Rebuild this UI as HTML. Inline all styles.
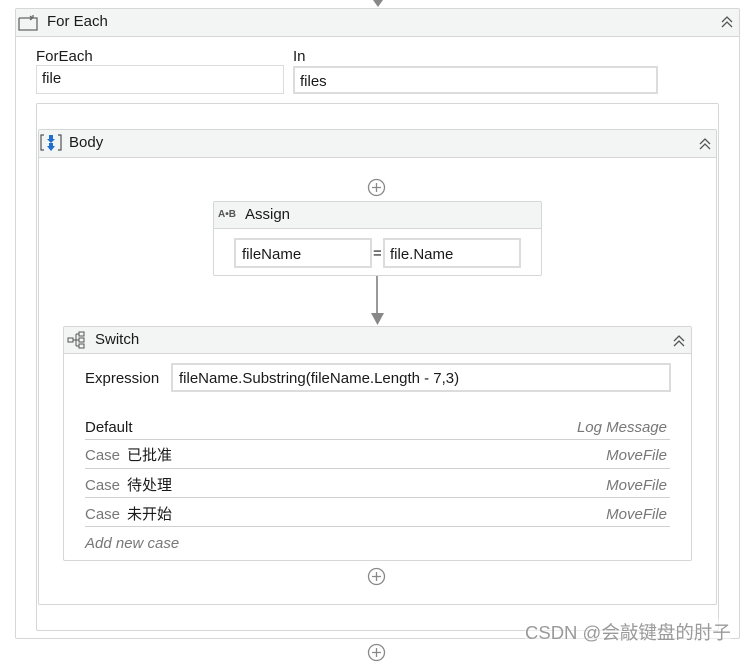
<!DOCTYPE html>
<html><head><meta charset="utf-8"><style>
*{box-sizing:border-box;margin:0;padding:0}
body{width:750px;height:652px;background:#fff;position:relative;overflow:hidden;font-family:"Liberation Sans","Noto Sans CJK SC",sans-serif;font-size:15px;color:#1a1a1a}
.a{position:absolute}
.box{position:absolute;border:1px solid #d6d6d6;border-radius:2px;background:#fff}
.hdr{position:absolute;left:0;right:0;top:0;background:#f3f4f4;border-bottom:1px solid #d6d6d6}
.inp{position:absolute;border:2px solid #dcdcdc;background:#fff;padding-left:5px;line-height:24px}
.row{position:absolute;left:85px;width:585px;border-bottom:1px solid #d0d0d0;height:29px}
.g{color:#777}
.it{font-style:italic;color:#777}
.cn{font-family:"Noto Sans CJK SC",sans-serif;font-size:15px;color:#1a1a1a}
</style></head><body>
<svg class="a" style="left:372px;top:0" width="12" height="8"><path d="M1 0 L11 0 L6 7Z" fill="#888"/></svg>

<div class="box" style="left:15px;top:8px;width:725px;height:631px">
 <div class="hdr" style="height:28px"></div>
</div>
<svg class="a" style="left:18px;top:13px" width="22" height="18"><path d="M1 5 H8 M15 5 H19 V17 H1 V5" fill="none" stroke="#666" stroke-width="1.3"/><path d="M8 5 H14 M12 3 L14.5 5 L12 7" fill="none" stroke="#666" stroke-width="1.3"/><path d="M15 2 V5" stroke="#666" stroke-width="1.3"/></svg>
<div class="a" style="left:47px;top:13px">For Each</div>
<svg class="a" style="left:720px;top:15px" width="14" height="14"><path d="M2 7 L7 2 L12 7 M2 12 L7 7 L12 12" fill="none" stroke="#555" stroke-width="1.3"/></svg>

<div class="a" style="left:36px;top:48px">ForEach</div>
<div class="inp" style="left:36px;top:65px;width:248px;height:29px;border-width:1px;line-height:26px">file</div>
<div class="a" style="left:293px;top:48px">In</div>
<div class="inp" style="left:293px;top:66px;width:365px;height:28px;line-height:27px">files</div>

<div class="box" style="left:36px;top:103px;width:683px;height:528px"></div>
<div class="box" style="left:38px;top:129px;width:679px;height:476px">
 <div class="hdr" style="height:28px"></div>
</div>
<svg class="a" style="left:40px;top:134px" width="22" height="18"><path d="M4 1 H1 V16 H4 M18 1 H21 V16 H18" fill="none" stroke="#555" stroke-width="1.2"/><rect x="9" y="1" width="4" height="4" fill="#1e6fd0"/><path d="M7 5 H15 L11 9Z" fill="#1e6fd0"/><rect x="9" y="9" width="4" height="3" fill="#1e6fd0"/><path d="M7 12 H15 L11 17Z" fill="#1e6fd0"/></svg>
<div class="a" style="left:69px;top:134px">Body</div>
<svg class="a" style="left:698px;top:137px" width="14" height="14"><path d="M2 7 L7 2 L12 7 M2 12 L7 7 L12 12" fill="none" stroke="#555" stroke-width="1.3"/></svg>

<svg class="a" style="left:367px;top:178px" width="19" height="19"><circle cx="9.5" cy="9.5" r="8" fill="none" stroke="#888" stroke-width="1.3"/><path d="M5 9.5 H14 M9.5 5 V14" stroke="#888" stroke-width="1.3"/></svg>

<div class="box" style="left:213px;top:201px;width:329px;height:75px">
 <div class="hdr" style="height:27px"></div>
</div>
<div class="a" style="left:218px;top:209px;font-size:10px;font-weight:bold;color:#555">A•B</div>
<div class="a" style="left:245px;top:206px">Assign</div>
<div class="inp" style="left:234px;top:238px;width:138px;height:30px;line-height:29px;padding-left:6px">fileName</div>
<div class="a" style="left:373px;top:245px">=</div>
<div class="inp" style="left:383px;top:238px;width:138px;height:30px;line-height:29px">file.Name</div>

<div class="a" style="left:376px;top:276px;width:2px;height:40px;background:#999"></div>
<svg class="a" style="left:371px;top:313px" width="13" height="13"><path d="M0 0 H13 L6.5 12Z" fill="#888"/></svg>

<div class="box" style="left:63px;top:326px;width:629px;height:235px">
 <div class="hdr" style="height:27px"></div>
</div>
<svg class="a" style="left:67px;top:331px" width="22" height="18"><rect x="1" y="7" width="5" height="4" fill="none" stroke="#555"/><path d="M6 9 H9 M9 3 V15 M9 3 H12 M9 9 H12 M9 15 H12" stroke="#555" fill="none"/><rect x="12" y="1" width="5" height="4" fill="none" stroke="#555"/><rect x="12" y="7" width="5" height="4" fill="none" stroke="#555"/><rect x="12" y="13" width="5" height="4" fill="none" stroke="#555"/></svg>
<div class="a" style="left:95px;top:331px">Switch</div>
<svg class="a" style="left:672px;top:334px" width="14" height="14"><path d="M2 7 L7 2 L12 7 M2 12 L7 7 L12 12" fill="none" stroke="#555" stroke-width="1.3"/></svg>

<div class="a" style="left:85px;top:370px">Expression</div>
<div class="inp" style="left:171px;top:363px;width:500px;height:29px;line-height:28px;padding-left:6px">fileName.Substring(fileName.Length - 7,3)</div>

<div class="row" style="top:411px"><span class="a" style="left:0;top:8px">Default</span><span class="a it" style="right:3px;top:8px">Log Message</span></div>
<div class="row" style="top:440px"><span class="a g" style="left:0;top:7px">Case</span><span class="a cn" style="left:42px;top:4px">已批准</span><span class="a it" style="right:3px;top:7px">MoveFile</span></div>
<div class="row" style="top:469px"><span class="a g" style="left:0;top:8px">Case</span><span class="a cn" style="left:42px;top:5px">待处理</span><span class="a it" style="right:3px;top:8px">MoveFile</span></div>
<div class="row" style="top:498px"><span class="a g" style="left:0;top:8px">Case</span><span class="a cn" style="left:42px;top:5px">未开始</span><span class="a it" style="right:3px;top:8px">MoveFile</span></div>
<div class="a it" style="left:85px;top:535px">Add new case</div>

<svg class="a" style="left:367px;top:567px" width="19" height="19"><circle cx="9.5" cy="9.5" r="8" fill="none" stroke="#888" stroke-width="1.3"/><path d="M5 9.5 H14 M9.5 5 V14" stroke="#888" stroke-width="1.3"/></svg>
<svg class="a" style="left:367px;top:643px" width="19" height="19"><circle cx="9.5" cy="9.5" r="8" fill="none" stroke="#888" stroke-width="1.3"/><path d="M5 9.5 H14 M9.5 5 V14" stroke="#888" stroke-width="1.3"/></svg>

<div class="a" style="left:525px;top:619px;font-size:18.5px;color:#9a9a9a;white-space:nowrap;background:rgba(255,255,255,0.5)">CSDN @会敲键盘的肘子</div>
</body></html>
